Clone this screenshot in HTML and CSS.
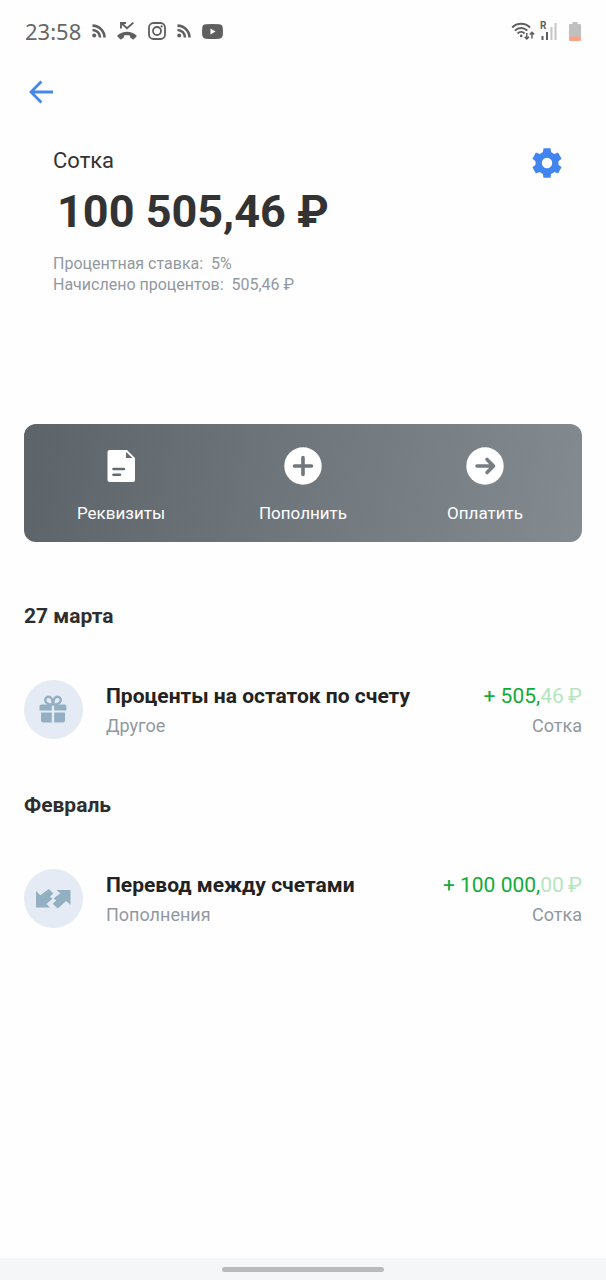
FILE: index.html
```html
<!DOCTYPE html>
<html lang="ru">
<head>
    <meta charset="UTF-8">
    <meta name="viewport" content="width=device-width, initial-scale=1.0">
    <title>Сотка</title>
    <link rel="stylesheet" href="styles.css">
</head>
<body>
    <div class="status">
        <div class="status-left">
            <span class="clock">23:58</span>
            <svg width="14" height="14" viewBox="0 0 14 14" fill="none" stroke="#5f5f5f" stroke-width="2.600">
                <circle cx="2.2" cy="11.6" r="2" fill="#5f5f5f" stroke="none"/>
                <path d="M0.5 6a7.500 7.500 0 0 1 7.500 7.500M0.5 1.600a12 12 0 0 1 12 12"/>
            </svg>
            <svg width="20" height="20" viewBox="0 0 20 20">
                <path d="M4 7.500V2h5M4.500 2.200l5.500 5 6.400-5.600" fill="none" stroke="#5f5f5f" stroke-width="1.900"/>
                <path d="M10 10.800c-3.600 0-6.900 1.200-9.300 3.400-.5.5-.5 1 0 1.500l2.300 2.400c.4.4 1 .4 1.400.1l2-1.500c.4-.3.6-.7.6-1.200v-.9c1.900-.6 4.100-.6 6 0v.9c0 .5.2.9.6 1.200l2 1.500c.4.3 1 .3 1.400-.1l2.300-2.400c.5-.5.5-1 0-1.500-2.400-2.200-5.700-3.400-9.300-3.400z" fill="#5f5f5f"/>
            </svg>
            <svg width="18" height="18" viewBox="0 0 18 18" fill="none" stroke="#5f5f5f" stroke-width="1.8">
                <rect x="1" y="1" width="16" height="16" rx="4.500"/>
                <circle cx="9" cy="9" r="4"/>
                <circle cx="13.600" cy="4.400" r="1.100" fill="#5f5f5f" stroke="none"/>
            </svg>
            <svg width="14" height="14" viewBox="0 0 14 14" fill="none" stroke="#5f5f5f" stroke-width="2.600">
                <circle cx="2.2" cy="11.6" r="2" fill="#5f5f5f" stroke="none"/>
                <path d="M0.5 6a7.500 7.500 0 0 1 7.500 7.500M0.5 1.600a12 12 0 0 1 12 12"/>
            </svg>
            <svg width="21" height="15" viewBox="0 0 21 15">
                <path d="M4 .3Q10.500-.3 17 .3Q20.300.4 20.700 3.500Q21.200 7.500 20.700 11.500Q20.300 14.600 17 14.700Q10.500 15.300 4 14.700Q.7 14.600.3 11.500Q-.2 7.500.3 3.500Q.7.4 4 .3z" fill="#5f5f5f"/>
                <path d="M8.500 4.500v6l5-3z" fill="#fff"/>
            </svg>
        </div>
        <div class="status-right">
            <svg width="24" height="20" viewBox="0 0 24 20" fill="none" stroke="#5f5f5f" stroke-width="2">
                <path d="M1.200 6.500a12.500 12.500 0 0 1 17.800 0M3.900 9.600a8.700 8.700 0 0 1 12.400 0M6.600 12.500a5 5 0 0 1 7 0"/>
                <circle cx="10.200" cy="14.900" r="1.300" fill="#5f5f5f" stroke="none"/>
                <path d="M15.800 12v6M13.600 15.700l2.200 2.300 2.200-2.300M21 17.500v-6M18.800 13.600l2.200-2.300 2.200 2.300" stroke-width="1.500"/>
            </svg>
            <svg class="signal" width="18" height="24" viewBox="0 0 18 24">
                <text class="roaming" x="0" y="10">R</text>
                <path d="M1.500 17h2v4h-2zM6 13h2v8H6z" fill="#5f5f5f"/>
                <path d="M10.500 8h2v13h-2zM14.500 4h2v17h-2z" fill="#c4c4c4"/>
            </svg>
            <svg class="battery" width="12" height="19" viewBox="0 0 12 19">
                <path d="M3.500 0h5v2H11q1 0 1 1v12H0V3q0-1 1-1h2.500z" fill="#c0c0c0"/>
                <path d="M0 14.500h12V18q0 1-1 1H1q-1 0-1-1z" fill="#f9a288"/>
            </svg>
        </div>
    </div>

    <div class="topbar">
        <a href="#" class="back" aria-label="Назад">
            <svg width="26" height="24" viewBox="0 0 26 24" fill="none" stroke="#4687ea" stroke-width="2.800">
                <path d="M25 12H3.500M13.400 1.500L3 12l10.400 10.500"/>
            </svg>
        </a>
    </div>

    <div class="account">
        <div class="info">
            <h1 class="name">Сотка</h1>
            <div class="balance">100 505,46 ₽</div>
            <p class="rate">Процентная ставка:&nbsp; 5%</p>
            <p class="rate">Начислено процентов:&nbsp; 505,46 ₽</p>
        </div>
        <button type="button" class="settings" aria-label="Настройки">
            <svg width="36" height="36" viewBox="0 0 36 36" fill="#4285f0">
                <circle cx="18" cy="18" r="11.500"/>
                <path d="M14.500 3.200h7l.9 6h-8.800z"/>
                <path d="M14.500 3.200h7l.9 6h-8.800z" transform="rotate(60 18 18)"/>
                <path d="M14.500 3.200h7l.9 6h-8.800z" transform="rotate(120 18 18)"/>
                <path d="M14.500 3.200h7l.9 6h-8.800z" transform="rotate(180 18 18)"/>
                <path d="M14.500 3.200h7l.9 6h-8.800z" transform="rotate(240 18 18)"/>
                <path d="M14.500 3.200h7l.9 6h-8.800z" transform="rotate(300 18 18)"/>
                <circle cx="18" cy="18" r="5.200" fill="#fff"/>
            </svg>
        </button>
    </div>

    <div class="actions">
        <button type="button" class="action">
            <svg width="38" height="38" viewBox="0 0 38 38">
                <path d="M7.500 3H25l8 8v22q0 2-2 2H7.500q-2 0-2-2V5q0-2 2-2z" fill="#fff"/>
                <path d="M24 5v6h6.500z" fill="#656c71"/>
                <path d="M11.500 22h10.500M11.500 27.800h6.500" stroke="#656c71" stroke-width="2.600" stroke-linecap="round"/>
            </svg>
            Реквизиты
        </button>
        <button type="button" class="action">
            <svg width="38" height="38" viewBox="0 0 38 38">
                <circle cx="19" cy="19" r="18.700" fill="#fff"/>
                <path d="M19 10.500v17M10.500 19h17" stroke="#70777d" stroke-width="3.600" stroke-linecap="round"/>
            </svg>
            Пополнить
        </button>
        <button type="button" class="action">
            <svg width="38" height="38" viewBox="0 0 38 38">
                <circle cx="19" cy="19" r="18.700" fill="#fff"/>
                <path d="M11 19h16M21 12.500l6.500 6.500-6.500 6.500" fill="none" stroke="#767e83" stroke-width="3.600" stroke-linecap="round" stroke-linejoin="round"/>
            </svg>
            Оплатить
        </button>
    </div>

    <div class="history">
        <h2 class="date">27 марта</h2>
        <div class="row">
            <div class="circle">
                <svg width="29" height="30" viewBox="0 0 29 30" fill="#93b0c3">
                    <path d="M2.500 9.500h10.300V15.500H.5v-4q0-2 2-2zM15.200 9.500h10.300q2 0 2 2v4H15.200zM2 17.500h10.800v10H4q-2 0-2-2zM15.200 17.500H26v8q0 2-2 2h-8.800z"/>
                    <path d="M13.800 9.500C13.800 4 12 1.800 9.500 1.800S5.800 4 6.400 6s3 3.500 7.400 3.500zM14.200 9.500C14.200 4 16 1.800 18.500 1.800S22.200 4 21.600 6s-3 3.500-7.400 3.500z" fill="none" stroke="#93b0c3" stroke-width="2.400"/>
                </svg>
            </div>
            <div class="what">
                <div class="title">Проценты на остаток по счету</div>
                <div class="sub">Другое</div>
            </div>
            <div class="sum">
                <div class="plus">+ 505,<span class="cents">46&thinsp;₽</span></div>
                <div class="sub">Сотка</div>
            </div>
        </div>

        <h2 class="date">Февраль</h2>
        <div class="row">
            <div class="circle">
                <svg width="36" height="20" viewBox="0 0 36 20" fill="#93b0c3">
                    <path d="M0 2l4.300 4.300L12.800 0l4.500 4.500-3.300 3.300 2.500 2-6 5.200 3.500 3.500H0z"/>
                    <path d="M34.500 16l-4.300-4-8.500 7.500-5-4.800 3.500-3.200-2.500-2 6.500-5.200L20.500 1h14z"/>
                </svg>
            </div>
            <div class="what">
                <div class="title">Перевод между счетами</div>
                <div class="sub">Пополнения</div>
            </div>
            <div class="sum">
                <div class="plus">+ 100 000,<span class="cents">00&thinsp;₽</span></div>
                <div class="sub">Сотка</div>
            </div>
        </div>
    </div>

    <div class="navbar"><div class="handle"></div></div>
</body>
</html>
```

FILE: styles.css
```css
*{margin:0;padding:0;box-sizing:border-box;}
body{
    min-height:100vh;
    display:flex;
    flex-direction:column;
    background:#fefefe;
    color:#333;
    font-family:Roboto,"Noto Sans",sans-serif;
}
svg{display:block;flex:none;}
button{border:0;background:none;font:inherit;color:inherit;cursor:pointer;}

.status{
    height:62px;
    padding:0 25px;
    display:flex;
    align-items:center;
    justify-content:space-between;
}
.status-left{display:flex;align-items:center;gap:11px;}
.status-right{display:flex;align-items:center;gap:5px;}
.clock{font-family:"Noto Sans",sans-serif;font-size:22px;line-height:30px;color:#666;}
.signal{overflow:visible;}
.roaming{font-size:10px;font-weight:700;fill:#5f5f5f;}
.battery{margin-left:6px;}

.topbar{height:60px;padding:0 28px;display:flex;align-items:center;}
.back{display:block;}

.account{
    padding:23px 41px 0 53px;
    display:flex;
    align-items:flex-start;
    justify-content:space-between;
}
.settings{margin-right:-12px;padding:0 12px;}
.name{font-size:22px;font-weight:400;line-height:32px;}
.balance{font-size:45px;font-weight:700;line-height:70px;padding-left:4px;margin-bottom:6px;}
.rate{font-size:16px;line-height:21px;color:#9298a0;}

.actions{
    margin:129px 24px 0;
    padding:23px 6px 0;
    height:118px;
    display:flex;
    border-radius:12px;
    background:linear-gradient(100deg,#5c646a,#838a90);
}
.action{
    flex:1;
    display:flex;
    flex-direction:column;
    align-items:center;
    align-self:flex-start;
    gap:16px;
    font-size:17px;
    line-height:24px;
    color:#fff;
}

.history{flex:1;padding:60px 24px 0;}
.date{font-size:21px;font-weight:700;line-height:28px;color:#2e2e2e;}
.row{
    margin:50px 0 51px;
    height:60px;
    display:flex;
    gap:23px;
}
.row:last-child{margin-bottom:0;}
.circle{
    width:59px;
    height:59px;
    flex:none;
    border-radius:50%;
    background:#e4ebf4;
    display:flex;
    align-items:center;
    justify-content:center;
}
.what{flex:1;}
.title{font-size:21px;font-weight:700;line-height:32px;color:#222;}
.sub{font-size:18px;line-height:28px;color:#9298a0;}
.sum{text-align:right;}
.plus{font-size:21px;line-height:32px;color:#12ab3a;}
.cents{color:#b4e6c0;}

.navbar{
    height:22px;
    background:#f5f6f8;
    display:flex;
    align-items:center;
    justify-content:center;
}
.handle{width:162px;height:5px;border-radius:3px;background:#b9babb;}
```
